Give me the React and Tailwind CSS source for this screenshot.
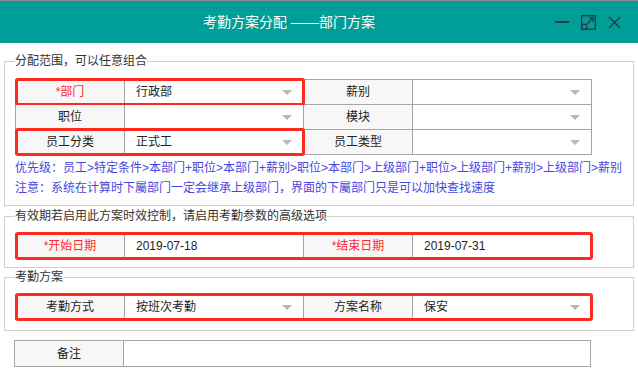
import React from "react";

const FONT = { fontFamily: '"Liberation Sans", "Noto Sans CJK SC", sans-serif' };

const Caret = () => (
  <span className="block w-0 h-0 border-l-[5px] border-r-[5px] border-t-[5px] border-l-transparent border-r-transparent border-t-[#b8b8b8]" />
);

const Label = ({ text, red }) => (
  <div
    className={`w-[109px] h-[25px] shrink-0 flex items-center justify-center bg-[#f7f7f7] border-r border-b border-[#a6a6a6] ${
      red ? "text-[#ff2a2a]" : "text-[#222]"
    }`}
  >
    {text}
  </div>
);

const Value = ({ text, select }) => (
  <div className="w-[179px] h-[25px] shrink-0 flex items-center justify-between pl-[11px] pr-[11px] bg-white border-r border-b border-[#a6a6a6] text-[#222]">
    <span>{text}</span>
    {select && <Caret />}
  </div>
);

const RedBox = () => (
  <div className="absolute -left-[1px] -right-[1px] -top-[2px] -bottom-[1px] border-[3px] border-[#ff2a1f] rounded-[3px] pointer-events-none" />
);

// mark: "left" outlines first pair, "all" outlines whole row
const Row = ({ cells, mark }) => {
  const [a, b, c, d] = cells;
  if (mark === "all") {
    return (
      <div className="relative flex">
        {a}
        {b}
        {c}
        {d}
        <RedBox />
      </div>
    );
  }
  return (
    <div className="flex">
      <div className="relative flex">
        {a}
        {b}
        {mark === "left" && <RedBox />}
      </div>
      {c}
      {d}
    </div>
  );
};

const Table = ({ children, className = "" }) => (
  <div className={`w-[577px] border-l border-t border-[#a6a6a6] ${className}`}>{children}</div>
);

const Section = ({ legend, children, className = "" }) => (
  <fieldset className={`ml-[4px] w-[630px] border border-[#d0d0d0] pl-[10px] ${className}`}>
    <legend className="text-[12px] leading-[18px] text-[#333]">{legend}</legend>
    {children}
  </fieldset>
);

export default function App() {
  return (
    <div className="w-[638px] h-[376px] bg-white overflow-hidden text-[12px]" style={FONT}>
      <div className="h-[1px] bg-[#8a8a8a]" />
      <div className="h-[42px] bg-[#009e96] flex items-center">
        <div className="flex-1 pl-[203px] text-white text-[14px]">考勤方案分配 ——部门方案</div>
        <div className="flex items-center gap-[12px] pr-[17px] text-[#2a3a48]">
          <svg width="14" height="14" viewBox="0 0 14 14">
            <rect x="0" y="6" width="14" height="2" fill="currentColor" />
          </svg>
          <svg width="15" height="15" viewBox="0 0 15 15" fill="none" stroke="currentColor" strokeWidth="1.3">
            <rect x="0.7" y="0.7" width="13.6" height="13.6" />
            <rect x="0.7" y="9.3" width="5" height="5" />
            <path d="M6.5 8.5 L12 3 M8 2.8 H12.2 V7" />
          </svg>
          <svg width="13" height="13" viewBox="0 0 13 13" fill="none" stroke="currentColor" strokeWidth="1.4">
            <path d="M1 1 L12 12 M12 1 L1 12" />
          </svg>
        </div>
      </div>

      <Section legend="分配范围，可以任意组合" className="mt-[9px] pb-[7px]">
        <Table className="mt-[9px]">
          <Row
            mark="left"
            cells={[
              <Label key="a" text="*部门" red />,
              <Value key="b" text="行政部" select />,
              <Label key="c" text="薪别" />,
              <Value key="d" select />,
            ]}
          />
          <Row
            cells={[
              <Label key="a" text="职位" />,
              <Value key="b" select />,
              <Label key="c" text="模块" />,
              <Value key="d" select />,
            ]}
          />
          <Row
            mark="left"
            cells={[
              <Label key="a" text="员工分类" />,
              <Value key="b" text="正式工" select />,
              <Label key="c" text="员工类型" />,
              <Value key="d" select />,
            ]}
          />
        </Table>
        <div className="mt-[3px] text-[#4646e0] leading-[20px] whitespace-nowrap">
          <div>优先级：员工&gt;特定条件&gt;本部门+职位&gt;本部门+薪别&gt;职位&gt;本部门&gt;上级部门+职位&gt;上级部门+薪别&gt;上级部门&gt;薪别</div>
          <div>注意：系统在计算时下屬部门一定会继承上级部门，界面的下屬部门只是可以加快查找速度</div>
        </div>
      </Section>

      <Section legend="有效期若启用此方案时效控制，请启用考勤参数的高级选项" className="mt-[1px] pb-[8px]">
        <Table className="mt-[8px]">
          <Row
            mark="all"
            cells={[
              <Label key="a" text="*开始日期" red />,
              <Value key="b" text="2019-07-18" />,
              <Label key="c" text="*结束日期" red />,
              <Value key="d" text="2019-07-31" />,
            ]}
          />
        </Table>
      </Section>

      <Section legend="考勤方案" className="pb-[10px]">
        <Table className="mt-[8px]">
          <Row
            mark="all"
            cells={[
              <Label key="a" text="考勤方式" />,
              <Value key="b" text="按班次考勤" select />,
              <Label key="c" text="方案名称" />,
              <Value key="d" text="保安" select />,
            ]}
          />
        </Table>
      </Section>

      <div className="ml-[14px] mt-[9px] w-[577px] flex border border-[#a6a6a6]">
        <div className="w-[109px] h-[25px] flex items-center justify-center bg-[#f7f7f7] border-r border-[#a6a6a6] text-[#222]">
          备注
        </div>
        <div className="flex-1 bg-white" />
      </div>
    </div>
  );
}
